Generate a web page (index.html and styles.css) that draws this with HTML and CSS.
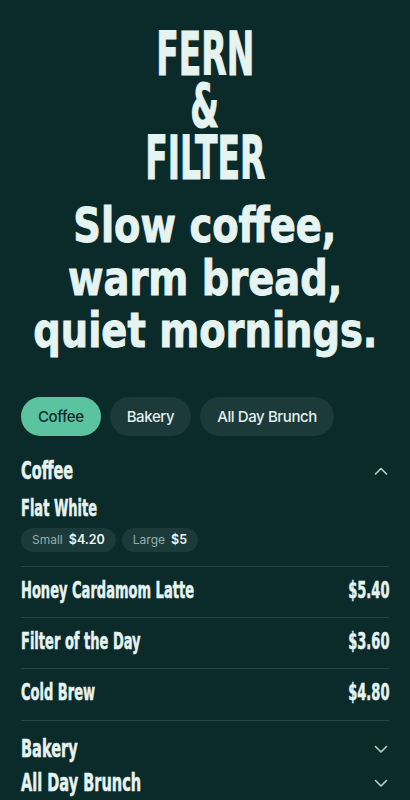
FILE: index.html
```html
<!DOCTYPE html>
<html lang="en">
<head>
<meta charset="utf-8">
<title>Fern &amp; Filter</title>
<link rel="stylesheet" href="styles.css">
</head>
<body>
<main class="page">
  <header class="hero">
    <h1 class="brand">
      <span class="brand-line">FERN</span>
      <span class="brand-line">&amp;</span>
      <span class="brand-line">FILTER</span>
    </h1>
    <p class="tagline">
      <span class="tag-line">Slow coffee,</span>
      <span class="tag-line">warm bread,</span>
      <span class="tag-line">quiet mornings.</span>
    </p>
  </header>

  <nav class="chips">
    <button class="chip chip-active">Coffee</button>
    <button class="chip">Bakery</button>
    <button class="chip">All Day Brunch</button>
  </nav>

  <div class="sections">
    <section class="section">
      <div class="section-head">
        <h2 class="section-title"><span class="cond-title">Coffee</span></h2>
        <svg class="chev" width="14" height="8" viewBox="0 0 14 8"><path d="M1.5 7 L7 1.5 L12.5 7" fill="none" stroke="currentColor" stroke-width="1.6" stroke-linecap="round" stroke-linejoin="round"/></svg>
      </div>
      <div class="section-body">
        <div class="item item-sized">
          <h3 class="item-name"><span class="cond">Flat White</span></h3>
          <div class="sizes">
            <span class="size"><span class="size-label">Small</span><span class="size-price">$4.20</span></span>
            <span class="size"><span class="size-label">Large</span><span class="size-price">$5</span></span>
          </div>
        </div>
        <div class="item item-row">
          <h3 class="item-name"><span class="cond">Honey Cardamom Latte</span></h3>
          <span class="item-price"><span class="cond cond-right">$5.40</span></span>
        </div>
        <div class="item item-row">
          <h3 class="item-name"><span class="cond">Filter of the Day</span></h3>
          <span class="item-price"><span class="cond cond-right">$3.60</span></span>
        </div>
        <div class="item item-row">
          <h3 class="item-name"><span class="cond">Cold Brew</span></h3>
          <span class="item-price"><span class="cond cond-right">$4.80</span></span>
        </div>
      </div>
    </section>

    <section class="section">
      <div class="section-head">
        <h2 class="section-title"><span class="cond-title">Bakery</span></h2>
        <svg class="chev" width="14" height="8" viewBox="0 0 14 8"><path d="M1.5 1.5 L7 7 L12.5 1.5" fill="none" stroke="currentColor" stroke-width="1.6" stroke-linecap="round" stroke-linejoin="round"/></svg>
      </div>
    </section>

    <section class="section">
      <div class="section-head">
        <h2 class="section-title"><span class="cond-title">All Day Brunch</span></h2>
        <svg class="chev" width="14" height="8" viewBox="0 0 14 8"><path d="M1.5 1.5 L7 7 L12.5 1.5" fill="none" stroke="currentColor" stroke-width="1.6" stroke-linecap="round" stroke-linejoin="round"/></svg>
      </div>
    </section>
  </div>
</main>
</body>
</html>
```

FILE: styles.css
```css
* { box-sizing: border-box; }

html, body {
  margin: 0;
  padding: 0;
  background: #0b2a2a;
}

body {
  color: #e6f4f1;
  font-family: Inter, "Noto Sans", sans-serif;
  overflow: hidden;
}

.page {
  padding: 28px 21px 0;
  height: 800px;
}

.hero {
  text-align: center;
}

.brand {
  margin: 0;
  display: flex;
  flex-direction: column;
  align-items: center;
  font-family: "DejaVu Sans Condensed", "DejaVu Sans", sans-serif;
  font-weight: 700;
  font-size: 60px;
  line-height: 52px;
  -webkit-text-stroke: 1px #e6f4f1;
}

.brand-line {
  display: block;
  white-space: nowrap;
  transform: scaleX(0.61);
}

.tagline {
  margin: 15px 0 0;
  display: flex;
  flex-direction: column;
  align-items: center;
  font-family: "DejaVu Sans Condensed", "DejaVu Sans", sans-serif;
  font-weight: 700;
  font-size: 48px;
  line-height: 52.5px;
  -webkit-text-stroke: 0.9px #e6f4f1;
}

.tag-line {
  display: block;
  white-space: nowrap;
  transform: scaleX(0.89);
}

.chips {
  display: flex;
  gap: 9px;
  margin-top: 40px;
}

.chip {
  height: 39px;
  padding: 0 17px;
  border: 0;
  border-radius: 20px;
  background: #1c3a39;
  color: #e2efed;
  font-family: Inter, "Noto Sans", sans-serif;
  font-size: 15px;
  font-weight: 500;
  letter-spacing: -0.4px;
}

.chip-active {
  background: #5cc3a0;
  color: #0b2a2a;
}

.sections {
  display: flex;
  flex-direction: column;
  gap: 6px;
  margin-top: 21px;
}

.section-head {
  display: flex;
  align-items: center;
  justify-content: space-between;
  height: 28px;
}

.section-title {
  margin: 0;
  font-family: "DejaVu Sans Condensed", "DejaVu Sans", sans-serif;
  font-weight: 700;
  font-size: 24.5px;
  line-height: 28px;
  -webkit-text-stroke: 0.5px #e6f4f1;
}

.cond-title {
  display: inline-block;
  white-space: nowrap;
  transform: scaleX(0.66);
  transform-origin: left center;
}

.cond {
  display: inline-block;
  white-space: nowrap;
  transform: scaleX(0.63);
  transform-origin: left center;
}

.cond-right {
  transform-origin: right center;
}

.chev {
  color: #b9d1cd;
  margin-right: 1px;
}

.section-body {
  padding-bottom: 8px;
}

.item-sized {
  padding-top: 10px;
  padding-bottom: 14px;
  border-bottom: 1px solid #264644;
}

.item-name {
  margin: 0;
  font-family: "DejaVu Sans Condensed", "DejaVu Sans", sans-serif;
  font-weight: 700;
  font-size: 23px;
  line-height: 26px;
  -webkit-text-stroke: 0.5px #e6f4f1;
}

.sizes {
  display: flex;
  gap: 6px;
  margin-top: 7px;
}

.size {
  display: inline-flex;
  align-items: center;
  gap: 6px;
  height: 24px;
  padding: 0 11px;
  border-radius: 12px;
  background: #1c3a39;
  font-size: 12px;
}

.size-label {
  color: #93aeab;
}

.size-price {
  color: #eef7f5;
  font-weight: 600;
  font-size: 12.5px;
}

.item-row {
  display: flex;
  justify-content: space-between;
  align-items: flex-start;
  padding: 10px 0 14px;
  border-bottom: 1px solid #264644;
}

.item-row:last-child {
  padding-bottom: 15px;
}

.item-price {
  font-family: "DejaVu Sans Condensed", "DejaVu Sans", sans-serif;
  font-weight: 700;
  font-size: 23px;
  line-height: 26px;
  -webkit-text-stroke: 0.5px #e6f4f1;
}
```
